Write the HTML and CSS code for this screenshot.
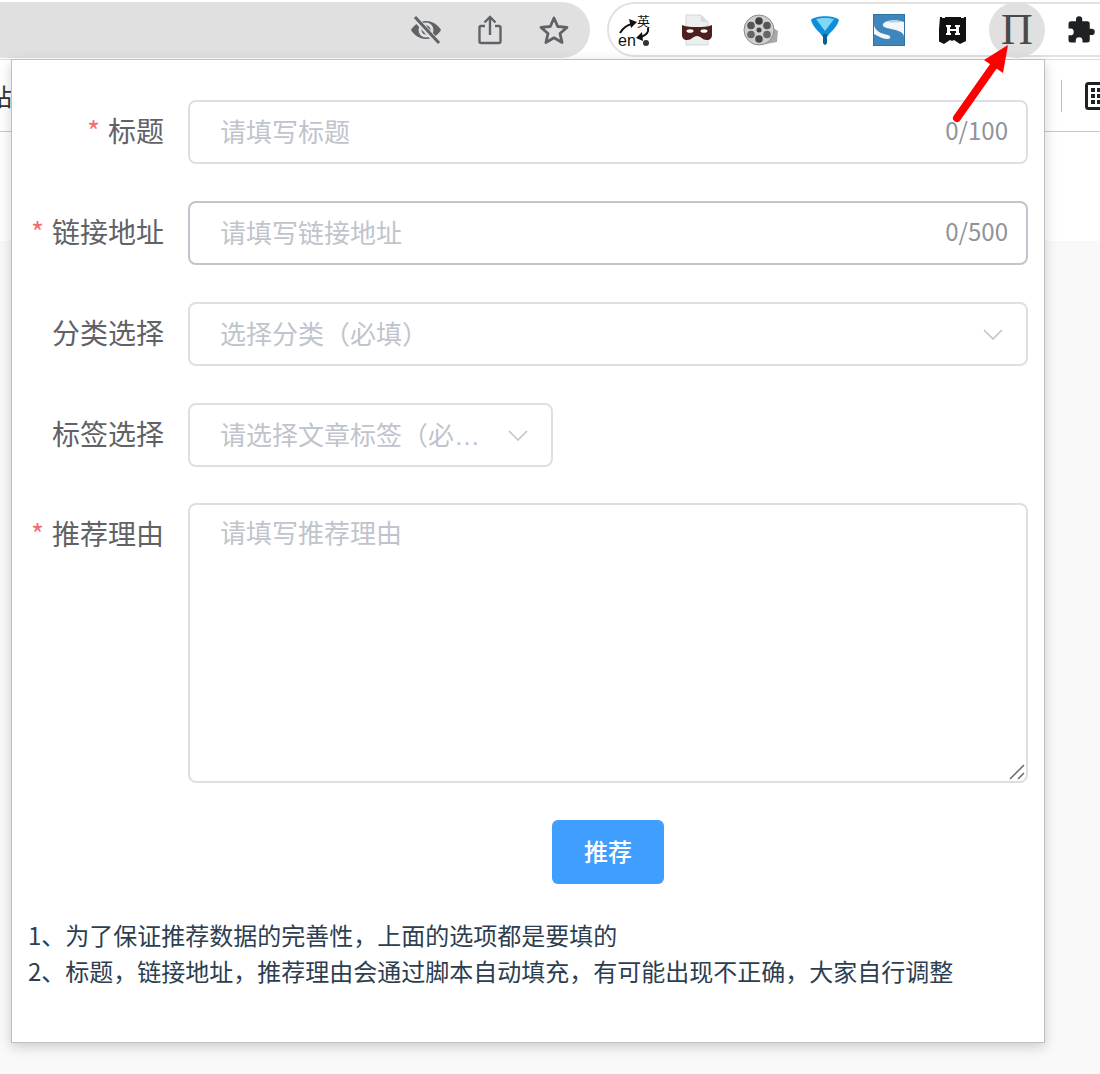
FILE: index.html
```html
<!DOCTYPE html>
<html lang="zh-CN">
<head>
<meta charset="utf-8">
<title>推荐</title>
<link rel="stylesheet" href="styles.css">
</head>
<body>
<header class="toolbar">
  <div class="omnibox">
    <svg class="omni-icon" viewBox="0 0 32 32"><path d="M16 7C9 7 3.500 11.500 1 16c2.500 4.500 8 9 15 9s12.500-4.500 15-9c-2.500-4.500-8-9-15-9z" fill="#5f6368"/><circle cx="16" cy="16" r="7.500" fill="#e0e0e0"/><circle cx="16" cy="16" r="4.500" fill="#5f6368"/><path d="M4 3l24 26" stroke="#e0e0e0" stroke-width="6"/><path d="M5 3l24 26" stroke="#5f6368" stroke-width="3"/></svg>
    <svg class="omni-icon" viewBox="0 0 32 32" fill="none" stroke="#5f6368" stroke-width="2.400"><path d="M11 12H7a1.500 1.500 0 0 0-1.500 1.500v14A1.500 1.500 0 0 0 7 29h18a1.500 1.500 0 0 0 1.500-1.500v-14A1.500 1.500 0 0 0 25 12h-4"/><path d="M16 21V3M10.500 8.500 16 3l5.500 5.500"/></svg>
    <svg class="omni-icon" viewBox="0 0 32 32" fill="none" stroke="#5f6368" stroke-width="2.800" stroke-linejoin="round"><path d="M16 4l3.700 8.500 9.300.9-7 6.100 2.100 9L16 23.800 7.900 28.500l2.100-9-7-6.100 9.300-.9z"/></svg>
  </div>
  <div class="extensions">
    <div class="ext">
      <svg class="tr-arrows" viewBox="0 0 48 48" fill="none" stroke="#111" stroke-width="2"><path d="M11 27c3-5 7-8 12-9"/><path d="M20 13l8 3-6 6z" fill="#111" stroke="none"/><path d="M39 22c1 4-2 7-7 9"/><path d="M33 26l-6 6 7 3z" fill="#111" stroke="none"/><circle cx="37" cy="37" r="3" fill="#333" stroke="none"/></svg>
      <span class="tr-zh">英</span><span class="tr-en">en</span>
    </div>
    <div class="ext">
      <svg class="icon-32" viewBox="0 0 32 32"><path d="M5 1h15l7 7v23H5z" fill="#eceef0" stroke="#d5d5d5"/><path d="M20 1v7h7z" fill="#d9dce0"/><path d="M1 11c5 2 9 2 15 2s10 0 15-2v10c0 3-2 5-5 5-5 0-6-4-10-4s-5 4-10 4c-3 0-5-2-5-5z" fill="#4d1f1f"/><ellipse cx="9" cy="17" rx="3.500" ry="1.800" fill="#fff"/><ellipse cx="23" cy="17" rx="3.500" ry="1.800" fill="#fff"/></svg>
    </div>
    <div class="ext">
      <svg class="icon-36" viewBox="0 0 36 36"><path d="M20 10 35 19 34 30 18 33z" fill="#a8a8a8"/><circle cx="16" cy="18" r="15" fill="#cfcfcf" stroke="#8a8a8a"/><circle cx="16" cy="18" r="2.500" fill="#444"/><circle cx="16" cy="9" r="3.800" fill="#3f3f3f"/><circle cx="16" cy="27" r="3.800" fill="#4a4a4a"/><circle cx="8" cy="13.500" r="3.800" fill="#555"/><circle cx="24" cy="13.500" r="3.800" fill="#555"/><circle cx="8" cy="22.500" r="3.800" fill="#666"/><circle cx="24" cy="22.500" r="3.800" fill="#666"/></svg>
    </div>
    <div class="ext">
      <svg class="icon-32" viewBox="0 0 32 32"><path d="M2 6C6 1 26 1 30 6c-2 8-9 12-12 17v6l-2 2-2-2v-6C11 18 4 14 2 6z" fill="#0c8ed8"/><path d="M7 5c5-1.500 13-1.500 18 0l-9 12z" fill="#7fd6f5"/><path d="M14 20h4v9l-2 2-2-2z" fill="#0a5f94"/></svg>
    </div>
    <div class="ext">
      <svg class="icon-32" viewBox="0 0 32 32"><rect x=".500" y=".500" width="31" height="31" fill="#f3f7fa" stroke="#2f74a8"/><path d="M1 1h30v7C24 5 12 6 10 10c-1 3 3 4 8 5 6 1 13 3 13 8v8H1V20c5 3 10 5 14 5 3 0 3-3 0-4C9 20 1 17 1 10z" fill="#3f86bd"/><path d="M14 8c4-2 10-2 16 0-5 0-11 1-16 0z" fill="#a9cfe9"/></svg>
    </div>
    <div class="ext">
      <svg class="icon-28" viewBox="0 0 28 28"><path d="M1 1h2v1h3V1h16v1h3V1h2v24l-6 3-6-4-2 1-2-1-6 4-6-3z" fill="#111"/><path d="M7 9h5v2h-1v2h6v-2h-1V9h5v2h-1v6h1v2h-5v-2h1v-2h-6v2h1v2H7v-2h1v-6H7z" fill="#fff"/></svg>
    </div>
    <div class="ext ext-active"><span class="pi">Π</span></div>
    <div class="ext">
      <svg class="icon-30" viewBox="0 0 24 24"><path d="M20.500 11H19V7a2 2 0 0 0-2-2h-4V3.500a2.500 2.500 0 0 0-5 0V5H4a2 2 0 0 0-2 2v3.800h1.500a2.700 2.700 0 0 1 0 5.400H2V20a2 2 0 0 0 2 2h3.800v-1.500a2.700 2.700 0 0 1 5.400 0V22H17a2 2 0 0 0 2-2v-4h1.500a2.500 2.500 0 0 0 0-5z" fill="#202124"/></svg>
    </div>
  </div>
</header>
<nav class="bookmarks">
  <span class="bookmark-text">站</span>
  <div class="bookmark-tools">
    <span class="bookmark-sep"></span>
    <svg class="bookmark-grid" viewBox="0 0 28 28"><rect x="1.500" y="1.500" width="25" height="25" rx="2" fill="none" stroke="#202124" stroke-width="3"/><g fill="#202124"><rect x="6" y="6" width="4" height="4"/><rect x="12" y="6" width="4" height="4"/><rect x="18" y="6" width="4" height="4"/><rect x="6" y="12" width="4" height="4"/><rect x="12" y="12" width="4" height="4"/><rect x="18" y="12" width="4" height="4"/><rect x="6" y="18" width="4" height="4"/><rect x="12" y="18" width="4" height="4"/><rect x="18" y="18" width="4" height="4"/></g></svg>
  </div>
</nav>
<div class="page-head"></div>

<section class="popup">
  <form class="form">
    <div class="row">
      <label class="label required">标题</label>
      <div class="field">
        <input class="input" type="text" placeholder="请填写标题">
        <span class="count">0/100</span>
      </div>
    </div>
    <div class="row">
      <label class="label required">链接地址</label>
      <div class="field">
        <input class="input input-hover" type="text" placeholder="请填写链接地址">
        <span class="count">0/500</span>
      </div>
    </div>
    <div class="row">
      <label class="label">分类选择</label>
      <div class="field select">
        <span class="select-text">选择分类（必填）</span>
        <svg class="chevron" viewBox="0 0 20 11"><path d="M1 1l9 9 9-9" fill="none" stroke="#c0c4cc" stroke-width="1.600"/></svg>
      </div>
    </div>
    <div class="row row-tight">
      <label class="label">标签选择</label>
      <div class="field select select-small">
        <span class="select-text">请选择文章标签（必填）</span>
        <svg class="chevron" viewBox="0 0 20 11"><path d="M1 1l9 9 9-9" fill="none" stroke="#c0c4cc" stroke-width="1.600"/></svg>
      </div>
    </div>
    <div class="row">
      <label class="label required">推荐理由</label>
      <div class="field">
        <textarea class="textarea" placeholder="请填写推荐理由"></textarea>
        <svg class="grip" viewBox="0 0 16 16"><path d="M1 15 15 1M9 15l6-6" stroke="#666" stroke-width="1.500" fill="none"/></svg>
      </div>
    </div>
    <div class="actions">
      <button class="button" type="button">推荐</button>
    </div>
  </form>
  <div class="notes">
    <div>1、为了保证推荐数据的完善性，上面的选项都是要填的</div>
    <div>2、标题，链接地址，推荐理由会通过脚本自动填充，有可能出现不正确，大家自行调整</div>
  </div>
</section>

<svg class="arrow" viewBox="0 0 70 90"><path d="M6 75 44 21" stroke="#fe0000" stroke-width="8" stroke-linecap="round" fill="none"/><path d="M57 2 33 17 52 30z" fill="#fe0000"/></svg>
</body>
</html>
```

FILE: styles.css
```css
* { box-sizing: border-box; }

html, body {
  margin: 0;
  height: 100%;
}

body {
  width: 1100px;
  height: 1074px;
  overflow: hidden;
  position: relative;
  background: #f9f9f9;
  font-family: "Noto Sans CJK SC", "Noto Sans", sans-serif;
}

/* browser chrome behind the popup */
.toolbar {
  height: 60px;
  display: flex;
  align-items: center;
  background: #fff;
  border-bottom: 1px solid #dcdcdc;
  overflow: hidden;
}

.omnibox {
  width: 590px;
  height: 56px;
  flex: none;
  display: flex;
  align-items: center;
  justify-content: flex-end;
  gap: 32px;
  padding-right: 20px;
  background: #e0e0e0;
  border-radius: 0 28px 28px 0;
}

.omni-icon {
  width: 32px;
  height: 32px;
}

.extensions {
  flex: none;
  width: 540px;
  height: 55px;
  margin-left: 17px;
  display: flex;
  align-items: center;
  gap: 16px;
  border: 2px solid #e2e2e2;
  border-radius: 28px;
  background: #fff;
}

.ext {
  position: relative;
  width: 48px;
  height: 48px;
  flex: none;
  display: flex;
  align-items: center;
  justify-content: center;
}

.ext-active::before {
  content: "";
  position: absolute;
  left: -4px;
  top: -4px;
  width: 56px;
  height: 56px;
  border-radius: 50%;
  background: #e0e0e0;
}

.pi {
  position: relative;
  font-family: "Liberation Serif", serif;
  font-size: 44px;
  line-height: 48px;
  color: #4a4a4a;
}

.icon-32 { width: 32px; height: 32px; }
.icon-36 { width: 36px; height: 36px; }
.icon-28 { width: 28px; height: 28px; }
.icon-30 { width: 30px; height: 30px; }

.tr-zh {
  position: absolute;
  left: 28px;
  top: 8px;
  font-size: 13px;
  line-height: 14px;
  color: #111;
}

.tr-en {
  position: absolute;
  left: 9px;
  top: 27px;
  font-family: "Liberation Sans", sans-serif;
  font-size: 16px;
  line-height: 16px;
  color: #111;
}

.tr-arrows {
  position: absolute;
  left: 0;
  top: 0;
  width: 48px;
  height: 48px;
}

.bookmarks {
  height: 72px;
  display: flex;
  align-items: center;
  justify-content: space-between;
  background: #fff;
  border-bottom: 1px solid #c9c9c9;
}

.bookmark-text {
  margin-left: -12px;
  font-size: 24px;
  color: #333;
}

.bookmark-tools {
  display: flex;
  align-items: center;
  gap: 23px;
  margin-right: -13px;
}

.bookmark-sep {
  width: 1px;
  height: 32px;
  background: #bdbdbd;
}

.bookmark-grid {
  width: 28px;
  height: 28px;
}

.page-head {
  height: 109px;
  background: #fff;
}

/* popup */
.popup {
  position: absolute;
  left: 11px;
  top: 59px;
  width: 1034px;
  height: 984px;
  padding: 40px 0 0;
  background: #fff;
  border: 1px solid #c0c0c0;
  box-shadow: 0 4px 12px rgba(0, 0, 0, .18);
}

.form {
  display: flex;
  flex-direction: column;
}

.row {
  display: flex;
  margin-bottom: 37px;
}

.row-tight {
  margin-bottom: 36px;
}

.label {
  width: 152px;
  margin-right: 24px;
  flex: none;
  text-align: right;
  font-size: 28px;
  line-height: 60px;
  color: #606266;
}

.required::before {
  content: "*";
  margin-right: 8px;
  color: #f56c6c;
}

.field {
  position: relative;
  width: 840px;
}

.input,
.textarea,
.select {
  display: block;
  width: 840px;
  border: 2px solid #dcdfe6;
  border-radius: 8px;
  background: #fff;
  font-family: inherit;
  font-size: 26px;
  color: #606266;
  outline: none;
}

.input {
  height: 64px;
  padding: 0 120px 4px 30px;
}

.input-hover {
  border-color: #c0c4cc;
}

.input::placeholder,
.textarea::placeholder {
  color: #c0c4cc;
  opacity: 1;
}

.count {
  position: absolute;
  right: 20px;
  top: 0;
  font-size: 24px;
  line-height: 60px;
  color: #909399;
}

.select {
  height: 64px;
  display: flex;
  align-items: center;
  justify-content: space-between;
  padding: 0 23px 0 30px;
}

.select-small {
  width: 365px;
}

.select-text {
  flex: 1;
  min-width: 0;
  margin-top: -4px;
  white-space: nowrap;
  overflow: hidden;
  text-overflow: ellipsis;
  color: #c0c4cc;
}

.select-small .select-text {
  margin-right: 11px;
  font-family: "Liberation Sans", "Noto Sans CJK SC", sans-serif;
}

.chevron {
  flex: none;
  width: 20px;
  height: 11px;
}

.textarea {
  height: 280px;
  padding: 6px 30px;
  line-height: 42px;
  resize: none;
}

.grip {
  position: absolute;
  right: 3px;
  bottom: 3px;
  width: 16px;
  height: 16px;
}

.actions {
  display: flex;
  justify-content: center;
  width: 840px;
  margin-left: 176px;
}

.button {
  width: 112px;
  height: 64px;
  border: 0;
  border-radius: 6px;
  background: #409eff;
  color: #fff;
  font-family: inherit;
  font-size: 24px;
  font-weight: 500;
  padding: 0 0 4px;
}

.notes {
  margin-top: 33px;
  padding-left: 16px;
  font-size: 24px;
  line-height: 36px;
  color: #2c3e50;
}

.arrow {
  position: absolute;
  left: 951px;
  top: 43px;
  width: 70px;
  height: 90px;
}
```
